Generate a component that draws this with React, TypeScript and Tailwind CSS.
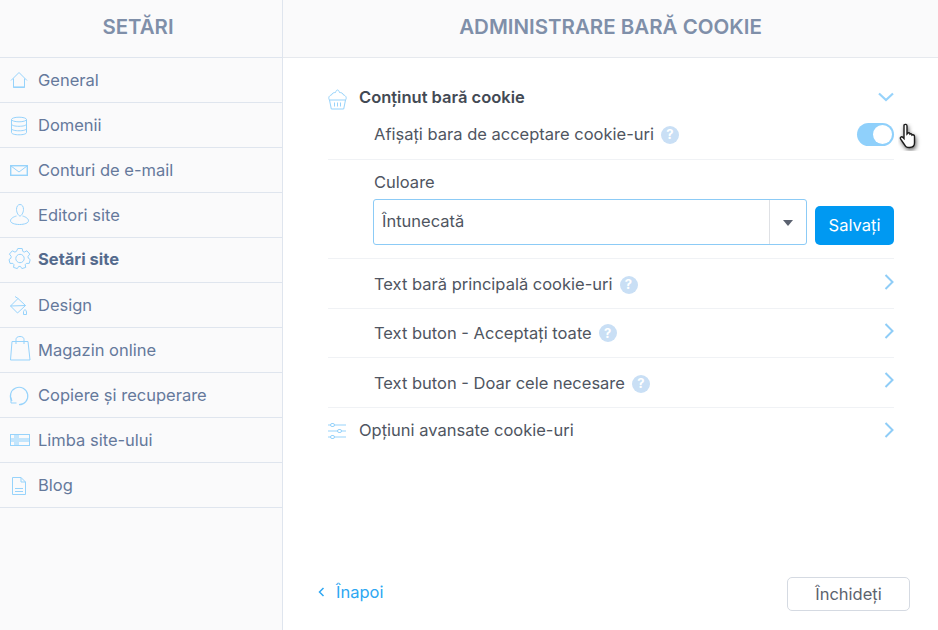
import type { ReactNode } from 'react';

const iconClass = 'overflow-visible fill-none stroke-[#97d3fb]';

function Svg({ children }: { children: ReactNode }) {
  return (
    <svg width="24" height="24" viewBox="0 0 24 24" className={iconClass} strokeWidth={1}>
      {children}
    </svg>
  );
}

const menu: { label: string; active?: boolean; icon: ReactNode }[] = [
  {
    label: 'General',
    icon: (
      <Svg>
        <path d="M3 12.500 11 4.500l8 8M5.500 10.500v9h11v-9" />
        <path d="M5.500 19.200h11" strokeWidth={1.6} />
      </Svg>
    ),
  },
  {
    label: 'Domenii',
    icon: (
      <Svg>
        <ellipse cx="11" cy="6.500" rx="7.500" ry="2.300" />
        <path d="M3.500 6.500v13c0 1.500 3.400 2.300 7.500 2.300s7.500-.8 7.500-2.300v-13M3.500 11c0 1.500 3.400 2.300 7.500 2.300s7.500-.8 7.500-2.300M3.500 15.500c0 1.500 3.400 2.300 7.500 2.300s7.500-.8 7.500-2.300" />
      </Svg>
    ),
  },
  {
    label: 'Conturi de e-mail',
    icon: (
      <Svg>
        <rect x="2.700" y="7.700" width="16.600" height="9.600" strokeWidth={1.4} />
        <path d="M3 8l8 6 8-6" />
      </Svg>
    ),
  },
  {
    label: 'Editori site',
    icon: (
      <Svg>
        <path d="M15.500 6.500c0 3.200-2.200 6.500-3.500 6.500s-3.500-3.300-3.500-6.500S10 1.500 12 1.500s3.500 1.800 3.500 5Z" />
        <path d="M8.500 13c-3 .8-6 2.500-6 4.800 0 2.200 4 3.700 9 3.700s9-1.500 9-3.700c0-2.300-3-4-6-4.800" />
      </Svg>
    ),
  },
  {
    label: 'Setări site',
    active: true,
    icon: (
      <Svg>
        <circle cx="12" cy="11.500" r="4.200" />
        <path d="M9.800 1.500h4.400l.6 2.900 1.500.7 2.600-1.300 2.900 3.300-1.800 2.300.3 1.800 1.900 1.400-1 3.800-2.900 0-1.100 1.300.5 2.700-3.800 1.200-1.400-2.200h-1.800l-1.400 2.200-3.800-1.200.5-2.700-1.100-1.300-2.900 0-1-3.800 1.900-1.400.3-1.800-1.800-2.300 2.900-3.300 2.600 1.300 1.500-.7Z" />
      </Svg>
    ),
  },
  {
    label: 'Design',
    icon: (
      <Svg>
        <path d="M2.500 13 10 5.500l7.500 7-8 7.500ZM2.500 13l15-.5M7 3.500l3 2" />
        <path d="M17 16.500c.8 1 1.500 1.500 1.500 2.500v2.500h-3V19c0-1 .7-1.500 1.500-2.500Z" />
      </Svg>
    ),
  },
  {
    label: 'Magazin online',
    icon: (
      <Svg>
        <path d="M4 3.500h16l2 18.500H2.500Z" />
        <path d="M8 6V1.500C8 -.5 9.500 -1.500 12 -1.500s4 1 4 3V6" />
      </Svg>
    ),
  },
  {
    label: 'Copiere și recuperare',
    icon: (
      <Svg>
        <path d="M4 18A8.700 8.700 0 1 1 11 21.700" strokeWidth={1.2} />
        <path d="M3 14.500v5.500h5.500" />
      </Svg>
    ),
  },
  {
    label: 'Limba site-ului',
    icon: (
      <svg width="24" height="24" viewBox="0 0 24 24" className="fill-none" strokeWidth={1}>
        <rect x="2" y="10" width="20" height="4" className="fill-[#c3e5fc]" />
        <rect x="6" y="6" width="5" height="12" className="fill-[#c3e5fc]" />
        <rect x="2.500" y="6.500" width="19" height="11" className="stroke-[#97d3fb]" />
      </svg>
    ),
  },
  {
    label: 'Blog',
    icon: (
      <Svg>
        <path d="M4.500 4.500h8.500l4.500 4.500v12.500h-13ZM13 4.500V9h4.500M7 15.500h8M7 18.500h8" />
      </Svg>
    ),
  },
];

function Help() {
  return (
    <span className="ml-[7px] flex h-[18px] w-[18px] items-center justify-center rounded-full bg-[#c9dff5] text-[13px] font-bold leading-none text-white">
      ?
    </span>
  );
}

function ChevronRight({ className = '-translate-y-[2px]' }: { className?: string }) {
  return (
    <svg width="10" height="16" viewBox="0 0 10 16" className={`fill-none stroke-[#8fcdf7] ${className}`} strokeWidth={2}>
      <path d="M1.500 1 8.500 8l-7 7" />
    </svg>
  );
}

function SubRow({ label, height, chevron, text = '' }: { label: string; height: string; chevron?: string; text?: string }) {
  return (
    <div className={`flex items-center justify-between border-b border-[#f0f2f5] pl-[46px] ${height}`}>
      <div className={`flex items-center text-[#4f5561] ${text}`}>
        {label}
        <Help />
      </div>
      <ChevronRight className={chevron} />
    </div>
  );
}

export default function App() {
  return (
    <div className="flex h-[630px] w-[938px] overflow-hidden bg-white font-['Inter','Liberation_Sans',sans-serif] text-[16.500px]">
      <aside className="w-[283px] shrink-0 border-r border-[#dfe5ee] bg-[#fafafb]">
        <div className="flex h-[58px] items-center justify-center border-b border-[#dfe5ee] pb-[2px] pr-[6px] text-[20.400px] font-semibold text-[#7f8fa9]">
          SETĂRI
        </div>
        {menu.map((item) => (
          <div
            key={item.label}
            className={`flex h-[45px] items-center border-b border-[#dfe5ee] pl-[8px] ${
              item.active ? 'pb-[2px] font-bold text-[#546a8d]' : 'text-[#65799b]'
            }`}
          >
            <span className="flex w-[30px] shrink-0 items-center">{item.icon}</span>
            {item.label}
          </div>
        ))}
      </aside>

      <main className="relative flex min-w-0 flex-1 flex-col">
        <div className="flex h-[58px] items-center justify-center border-b border-[#e6e9ee] bg-[#fafafb] pb-[2px] text-[20.500px] font-semibold text-[#7f8fa9]">
          ADMINISTRARE BARĂ COOKIE
        </div>

        <div className="flex-1 pl-[45px] pr-[44px] pt-[20px]">
          <div className="flex h-[38px] items-center justify-between">
            <div className="flex items-center font-semibold text-[#434a54]">
              <span className="flex w-[31px] items-center">
                <svg width="20" height="22" viewBox="0 0 20 22" className={iconClass} strokeWidth={1}>
                  <path d="M1.500 14h16l-1.800 9H3.300ZM6.500 16.500v4M9.500 16.500v4M12.500 16.500v4" />
                  <path d="M1.500 14C0 12 1 9.500 3.500 9 4 7 6 6.500 7.500 6.500 8 5 8.500 4 9.500 4s1.500 1 2 2.500c1.500 0 3.500.5 4 2.500 2.500.5 3.500 3 2 5" />
                </svg>
              </span>
              Conținut bară cookie
            </div>
            <svg width="16" height="10" viewBox="0 0 16 10" className="fill-none stroke-[#97d3fb]" strokeWidth={2.200}>
              <path d="M1 1.500 8 8l7-6.500" />
            </svg>
          </div>

          <div className="flex h-[44px] items-center justify-between border-b border-[#f0f2f5] pb-[6px] pl-[46px]">
            <div className="flex items-center text-[#4f5561]">
              Afișați bara de acceptare cookie-uri
              <Help />
            </div>
            <div className="flex h-[23px] w-[37px] items-center justify-end rounded-full bg-[#8fd0fb] pr-[2px]">
              <span className="h-[19px] w-[19px] rounded-full bg-white" />
            </div>
          </div>

          <div className="h-[99px] border-b border-[#f0f2f5] pl-[45px] pt-[12px] text-[#4f5561]">
            <div className="pl-px leading-[21px]">Culoare</div>
            <div className="mt-[6px] flex items-end gap-[8px]">
              <div className="flex h-[46px] flex-1 items-center rounded-[3px] border border-[#8ccbf6]">
                <span className="flex-1 pb-[2px] pl-[8px]">Întunecată</span>
                <span className="flex h-full w-[37px] items-center justify-center border-l border-[#dfe1e5]">
                  <span className="mt-[1px] h-0 w-0 border-x-[5px] border-t-[6px] border-x-transparent border-t-[#5b6270]" />
                </span>
              </div>
              <button className="h-[39px] w-[79px] rounded-[5px] bg-[#0099f2] text-white">Salvați</button>
            </div>
          </div>

          <SubRow label="Text bară principală cookie-uri" height="h-[50px]" text="pt-[2px]" />
          <SubRow label="Text buton - Acceptați toate" height="h-[49px]" />
          <SubRow label="Text buton - Doar cele necesare" height="h-[50px]" text="pt-[2px]" chevron="-translate-y-[3px]" />

          <div className="flex h-[45px] items-center justify-between text-[#4f5561]">
            <div className="flex items-center">
              <span className="flex w-[31px] items-center">
                <svg width="18" height="18" viewBox="0 0 18 18" className={iconClass} strokeWidth={1}>
                  <path d="M0 3h3M6 3h12M0 9h10M13 9h5M0 15h3M6 15h12" />
                  <rect x="2.500" y="1.500" width="4" height="3" rx="1.500" />
                  <rect x="9.500" y="7.500" width="4" height="3" rx="1.500" />
                  <rect x="2.500" y="13.500" width="4" height="3" rx="1.500" />
                </svg>
              </span>
              Opțiuni avansate cookie-uri
            </div>
            <ChevronRight className="-translate-y-[1px]" />
          </div>
        </div>

        <div className="flex items-center justify-between pb-[19px] pl-[35px] pr-[28px]">
          <div className="flex -translate-y-[2px] items-center text-[#2ea7f2]">
            <svg width="7" height="10" viewBox="0 0 7 10" className="mr-[11px] fill-none stroke-[#2ea7f2]" strokeWidth={1.500}>
              <path d="M5.500 1 1.500 5l4 4" />
            </svg>
            Înapoi
          </div>
          <button className="h-[34px] w-[123px] rounded-[5px] border border-[#d5dae2] bg-white text-[#5c636e]">
            Închideți
          </button>
        </div>

        {/* pointer over the toggle */}
        <svg width="24" height="28" viewBox="0 0 24 28" className="absolute left-[615px] top-[123px]">
          <path
            d="M6 2c1-1 3-1 3 1v8l1-1c1-.5 2 0 2 1 1-.5 2 0 2 1 1-.5 2.500 0 2.500 1.500V20c0 3-2 4.500-5 4.500-3.500 0-4-1-5.500-3.500L2.500 16c-.8-1.500 1-3 2.500-1.500l1 1Z"
            className="fill-white stroke-[#1c1c1c] drop-shadow-[1px_2px_2px_rgba(0,0,0,0.6)]"
            strokeWidth={1.400}
          />
        </svg>
      </main>
    </div>
  );
}
